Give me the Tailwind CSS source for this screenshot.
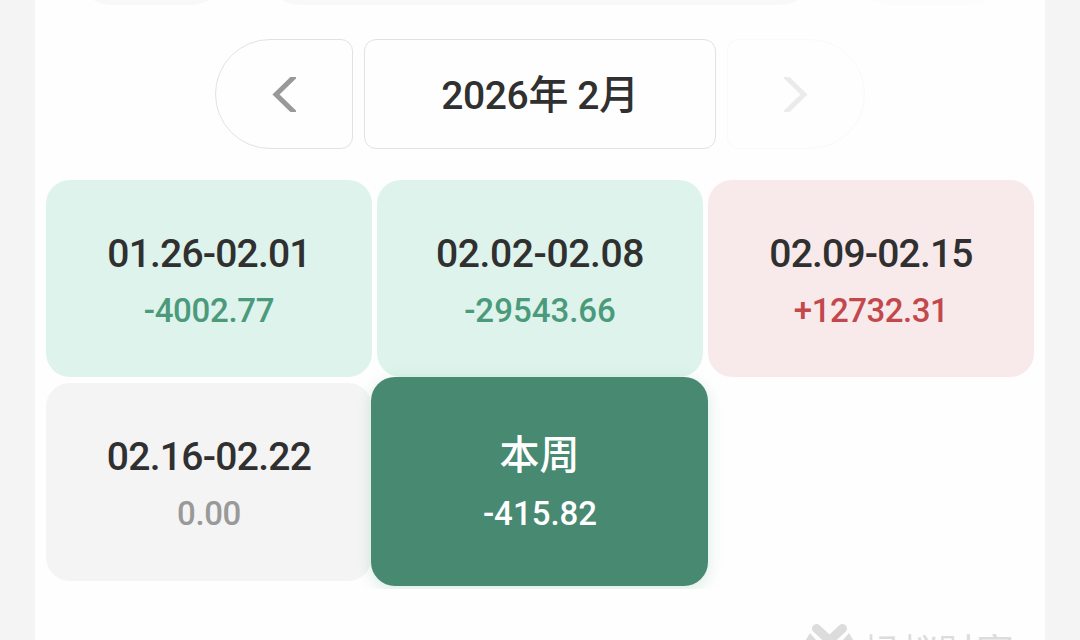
<!DOCTYPE html>
<html lang="zh-CN">
<head>
    <meta charset="UTF-8">
    <meta name="viewport" content="width=device-width, initial-scale=1.0">
    <title>收益日历</title>
    <script src="https://cdn.jsdelivr.net/npm/@tailwindcss/browser@4"></script>
</head>

<body class="w-[1080px] h-[640px] overflow-hidden bg-[#f4f4f4] text-[#303030] font-['Roboto','Noto_Sans_CJK_SC',sans-serif] font-medium">
    <main class="flex flex-col w-[1010px] h-[640px] mx-auto bg-[#fefefe] overflow-hidden">
        <!-- 上方筛选按钮 -->
        <div class="flex items-end justify-center gap-11 h-[5px] shrink-0">
            <div class="w-[144px] h-20 shrink-0 rounded-[32px] bg-[#f8f8f8]"></div>
            <div class="w-[546px] h-20 shrink-0 rounded-[32px] bg-[#f8f8f8]"></div>
            <div class="w-[144px] h-20 shrink-0 rounded-[32px] bg-[#fcfcfc]"></div>
        </div>

        <!-- 月份切换 -->
        <nav class="flex justify-center gap-[11px] h-[110px] mt-[34px] shrink-0">
            <button class="flex items-center justify-center w-[138px] pt-px border border-[#e2e2e2] rounded-l-[55px] rounded-r-xl" aria-label="上个月">
                <svg class="w-6 h-[35px]" viewBox="0 0 24 35" fill="none" stroke="#999999" stroke-width="5">
                    <path d="M23 -1 L4 17.5 L23 36"/>
                </svg>
            </button>
            <div class="flex items-center justify-center w-[352px] pt-1 border border-[#e2e2e2] rounded-xl text-[39px] leading-none tracking-[-0.4px] whitespace-pre">2026<span class="text-[40px]">年</span> 2<span class="text-[40px]">月</span></div>
            <button class="flex items-center justify-center w-[138px] pt-px border border-[#f9f9f9] rounded-l-xl rounded-r-[55px]" aria-label="下个月">
                <svg class="w-6 h-[35px]" viewBox="0 0 24 35" fill="none" stroke="#ebebeb" stroke-width="5">
                    <path d="M1 -1 L20 17.5 L1 36"/>
                </svg>
            </button>
        </nav>

        <!-- 每周收益 -->
        <section class="grid grid-cols-3 grid-rows-[197px_198px] gap-x-[5px] gap-y-1.5 h-[409px] mt-[31px] px-[11px] shrink-0 overflow-hidden text-center">
            <div class="rounded-3xl bg-[#ddf3eb] pt-[50px]">
                <div class="text-[39px] leading-[48px] tracking-[-0.8px]">01.26-02.01</div>
                <div class="text-[33px] leading-10 mt-[13px] tracking-[-0.3px] text-[#4a9a7b]">-4002.77</div>
            </div>
            <div class="rounded-3xl bg-[#ddf3eb] pt-[50px]">
                <div class="text-[39px] leading-[48px] tracking-[-0.4px]">02.02-02.08</div>
                <div class="text-[33px] leading-10 mt-[13px] text-[#4a9a7b]">-29543.66</div>
            </div>
            <div class="rounded-3xl bg-[#f8eaeb] pt-[50px]">
                <div class="text-[39px] leading-[48px] tracking-[-0.8px]">02.09-02.15</div>
                <div class="text-[33px] leading-10 mt-[13px] tracking-[-0.5px] text-[#c2484c]">+12732.31</div>
            </div>
            <div class="rounded-3xl bg-[#f4f4f4] pt-[50px]">
                <div class="text-[39px] leading-[48px] tracking-[-0.7px]">02.16-02.22</div>
                <div class="text-[33px] leading-10 mt-[13px] tracking-[-0.4px] text-[#999999]">0.00</div>
            </div>
            <div class="-ml-[5.7px] -mr-[4.7px] -mt-1.5 -mb-[5px] z-10 rounded-3xl bg-[#488971] pt-[55px] text-white shadow-[0_4px_16px_rgba(72,160,125,0.2)]">
                <div class="text-[40px] leading-[48px]">本周</div>
                <div class="text-[33px] leading-10 mt-3.5 pl-px">-415.82</div>
            </div>
        </section>

        <!-- 品牌水印 -->
        <footer class="flex items-start justify-end gap-2 mt-[34px] pr-[31px] shrink-0 text-[#dcdcdc]">
            <svg class="w-[50px] h-12 shrink-0" viewBox="0 0 50 48" fill="none" stroke="currentColor" stroke-width="9" stroke-linecap="round">
                <path d="M12.5 5.5 L25.5 17.5 L38.5 5.5"/>
                <path d="M6 10 L12 17 L6 28 L0 20 Z M45 10 L51 20 L45 28 L39 17 Z" fill="currentColor" stroke="none"/>
                <path d="M25.5 17 V40"/>
            </svg>
            <span class="mt-[3px] text-[38px] leading-[48px] font-normal font-['Noto_Sans_CJK_SC',sans-serif]">蚂蚁财富</span>
        </footer>
    </main>
</body>
</html>
